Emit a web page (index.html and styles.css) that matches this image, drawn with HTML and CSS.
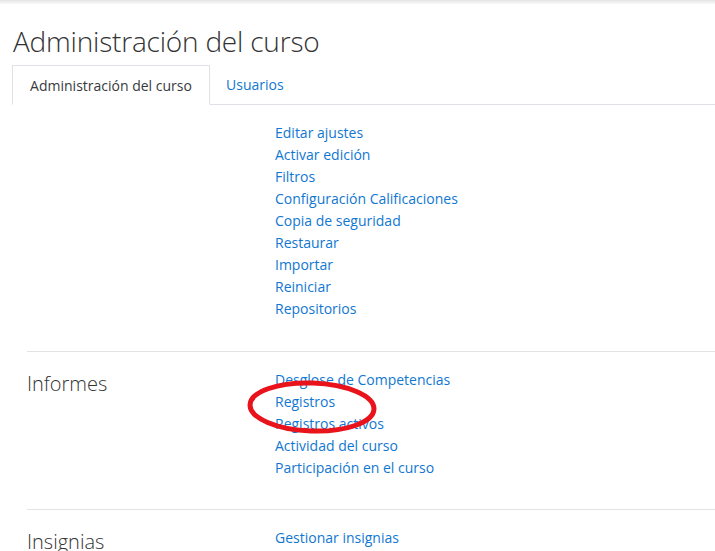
FILE: index.html
```html
<!DOCTYPE html>
<html lang="es">
<head>
<meta charset="utf-8">
<title>Administración del curso</title>
<link rel="stylesheet" href="styles.css">
</head>
<body>
<div class="topbar"></div>
<main class="page">
  <h1 class="title">Administración del curso</h1>
  <nav class="tabs">
    <span class="tab active">Administración del curso</span>
    <a class="tab" href="#">Usuarios</a>
    <span class="tab-fill"></span>
  </nav>
  <section class="group first">
    <div class="label"></div>
    <ul class="links">
      <li><a href="#">Editar ajustes</a></li>
      <li><a href="#">Activar edición</a></li>
      <li><a href="#">Filtros</a></li>
      <li><a href="#">Configuración Calificaciones</a></li>
      <li><a href="#">Copia de seguridad</a></li>
      <li><a href="#">Restaurar</a></li>
      <li><a href="#">Importar</a></li>
      <li><a href="#">Reiniciar</a></li>
      <li><a href="#">Repositorios</a></li>
    </ul>
  </section>
  <section class="group">
    <h2 class="label">Informes</h2>
    <ul class="links">
      <li><a href="#">Desglose de Competencias</a></li>
      <li class="marked"><a href="#">Registros</a>
        <svg class="circle" width="134" height="56" viewBox="0 0 134 56"><ellipse cx="67" cy="28" rx="62" ry="24" fill="none" stroke="#e8131b" stroke-width="5" transform="rotate(2 67 28)"/></svg>
      </li>
      <li><a href="#">Registros activos</a></li>
      <li><a href="#">Actividad del curso</a></li>
      <li><a href="#">Participación en el curso</a></li>
    </ul>
  </section>
  <section class="group">
    <h2 class="label">Insignias</h2>
    <ul class="links">
      <li><a href="#">Gestionar insignias</a></li>
    </ul>
  </section>
</main>
</body>
</html>
```
FILE: styles.css
```css
html, body {
  margin: 0;
  padding: 0;
  background: #fff;
  overflow: hidden;
}
body {
  font-family: "Open Sans", "Noto Sans", sans-serif;
  color: #373a3c;
  height: 551px;
}
.topbar {
  height: 4px;
  background: linear-gradient(#e4e4e4, #fafafa);
}
.page {
  padding-left: 12px;
}
.title {
  margin: 17px 0 0 1px;
  font-size: 28px;
  font-weight: 300;
  line-height: 40px;
  color: #333;
  letter-spacing: -0.2px;
}
.tabs {
  display: flex;
  margin-top: 4px;
  height: 40px;
}
.tab {
  display: flex;
  align-items: center;
  padding: 0 16px;
  font-size: 14px;
  color: #1177d1;
  text-decoration: none;
  border-bottom: 1px solid #dee2e6;
  box-sizing: border-box;
}
.tab.active {
  color: #373a3c;
  border: 1px solid #dee2e6;
  border-bottom-color: transparent;
  width: 198px;
  justify-content: center;
  padding: 0;
}
.tab-fill {
  flex: 1;
  border-bottom: 1px solid #dee2e6;
}
.group {
  display: grid;
  grid-template-columns: 248px 1fr;
  margin-left: 15px;
  border-top: 1px solid #e3e3e3;
  padding: 17px 0 30px;
}
.group.first {
  border-top: none;
  padding-top: 17px;
  padding-bottom: 31px;
}
.label {
  margin: 0;
  font-size: 20px;
  font-weight: 300;
  line-height: 30px;
  color: #333;
}
.links {
  list-style: none;
  margin: 0;
  padding: 0;
  font-size: 14px;
  line-height: 22px;
}
.links a {
  color: #1177d1;
  text-decoration: none;
}
.marked {
  position: relative;
}
.circle {
  position: absolute;
  left: -30px;
  top: -12px;
  pointer-events: none;
}
```
